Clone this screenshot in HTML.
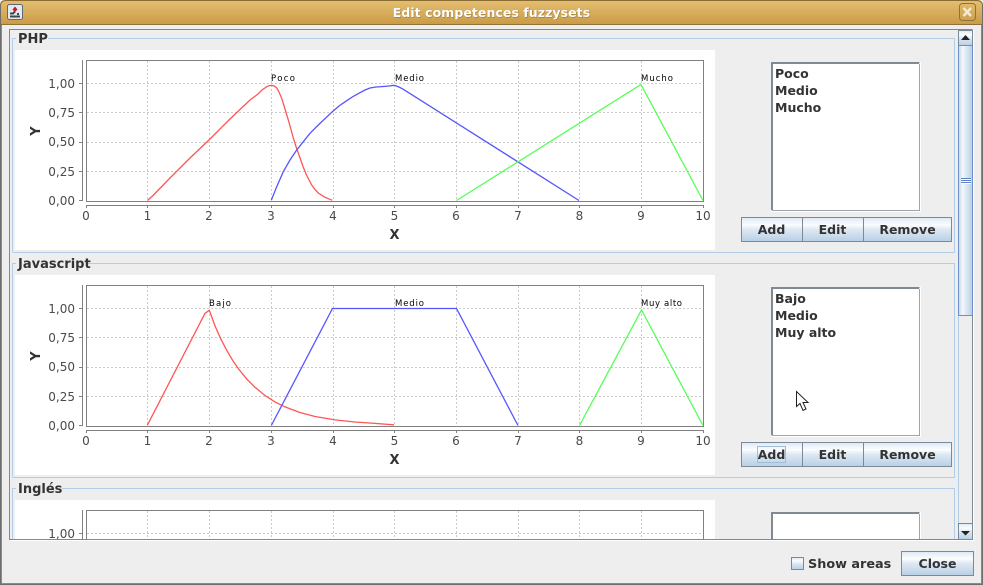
<!DOCTYPE html>
<html><head><meta charset="utf-8"><title>Edit competences fuzzysets</title>
<style>
html,body{margin:0;padding:0;background:#eee;width:983px;height:585px;overflow:hidden;}
body{position:relative;font-family:"DejaVu Sans",sans-serif;}
svg{position:absolute;left:0;top:0;display:block;}
.lbl{font:bold 13px "DejaVu Sans",sans-serif;fill:#333;}
.tk{font:12px "DejaVu Sans",sans-serif;fill:#4a4a4a;}
.ax{font:bold 13px "DejaVu Sans",sans-serif;fill:#333;}
.s{font:8.5px "DejaVu Sans",sans-serif;fill:#000;}
.li{font:bold 12.5px "DejaVu Sans",sans-serif;fill:#333;}
.b{font:bold 12.5px "DejaVu Sans",sans-serif;fill:#333;text-anchor:middle;}
.c{fill:none;stroke-width:1.3;}
</style></head><body>
<svg width="983" height="585" viewBox="0 0 983 585" xmlns="http://www.w3.org/2000/svg">
<defs>
<linearGradient id="tb" x1="0" y1="0" x2="0" y2="1"><stop offset="0" stop-color="#e5bf72"/><stop offset="1" stop-color="#c99a46"/></linearGradient>
<linearGradient id="bt" x1="0" y1="0" x2="0" y2="1"><stop offset="0" stop-color="#dde8f3"/><stop offset=".3" stop-color="#fbfdfe"/><stop offset=".5" stop-color="#dde8f3"/><stop offset="1" stop-color="#b8cfe5"/></linearGradient>
<linearGradient id="th" x1="0" y1="0" x2="1" y2="0"><stop offset="0" stop-color="#c4d6ea"/><stop offset=".3" stop-color="#f4f8fc"/><stop offset=".55" stop-color="#dde8f3"/><stop offset="1" stop-color="#b8cfe5"/></linearGradient>
<g id="frame" fill="none" shape-rendering="crispEdges">
<rect x="15" y="50" width="700" height="200" fill="#fff"/>
<g stroke="#cacaca" stroke-dasharray="2 2">
<path d="M147.5 61V201M209.5 61V201M271.5 61V201M333.5 61V201M394.5 61V201M456.5 61V201M518.5 61V201M579.5 61V201M641.5 61V201"/>
<path d="M87 83.5H703M87 112.5H703M87 142.5H703M87 171.5H703"/>
</g>
<rect x="86.5" y="60.5" width="617" height="141" stroke="#808080"/>
<path d="M82.5 60V201M79 83.5H82M79 112.5H82M79 142.5H82M79 171.5H82M79 200.5H82" stroke="#808080"/>
<path d="M86.5 205.5H703.5M86.5 205V208M147.5 205V208M209.5 205V208M271.5 205V208M333.5 205V208M394.5 205V208M456.5 205V208M518.5 205V208M579.5 205V208M641.5 205V208M703.5 205V208" stroke="#808080"/>
</g>
<g id="side" shape-rendering="crispEdges">
<rect x="773" y="64" width="146" height="146" fill="#fff"/>
<path d="M771.5 210V62.5H919.5M772.5 210V63.5H919" fill="none" stroke="#808a94"/>
<path d="M919.5 64V210.500H772" fill="none" stroke="#9aa5b0"/>
<path d="M920.5 62V211.500H771" fill="none" stroke="#fff"/>
<rect x="741.5" y="217.5" width="61" height="24" fill="url(#bt)" stroke="#7a8a99"/>
<rect x="802.5" y="217.5" width="61" height="24" fill="url(#bt)" stroke="#7a8a99"/>
<rect x="863.5" y="217.5" width="88" height="24" fill="url(#bt)" stroke="#7a8a99"/>
</g>
</defs>

<rect width="983" height="585" fill="#eee"/>
<path d="M0 25V6Q0 0 6 0H977Q983 0 983 6V25Z" fill="url(#tb)"/>
<path d="M0 24.5H983" stroke="#8f7238" stroke-width="1"/>
<path d="M.5 6V584.5H982.5V6" fill="none" stroke="#6e6e6e"/>
<path d="M1.5 25V583.5H981.5V25" fill="none" stroke="#8a8a8a"/>
<path d="M.5 6Q.5 .5 6 .5H977Q982.5 .5 982.5 6" fill="none" stroke="#8a6c30"/>

<rect x="7.5" y="4.5" width="15" height="15" rx="2" fill="#e4e9ef" stroke="#5d6a78"/>
<path d="M10 16.500H20M10 13.500H13L15 11.500M18 13V15" fill="none" stroke="#444" stroke-width="2"/>
<path d="M15 6.500L17.500 9.500L15 12L12.500 9.500Z" fill="#c02020"/>
<text x="492" y="17.500" text-anchor="middle" style="font:bold 12.600px 'DejaVu Sans',sans-serif" fill="#8a6a2c">Edit competences fuzzysets</text>
<text x="491.500" y="17" text-anchor="middle" style="font:bold 12.600px 'DejaVu Sans',sans-serif" fill="#fff">Edit competences fuzzysets</text>
<rect x="959.500" y="3.500" width="16" height="17" rx="3" fill="none" stroke="#8f7238"/>
<path d="M963.500 8L971 16M971 8L963.500 16" stroke="#f3ead6" stroke-width="2.400"/>

<rect x="10" y="29.500" width="963" height="510" fill="#eee"/>

<!-- PHP -->
<path d="M12.500 252V38.500H16M48 38.500H954.500V252.500H12.500" fill="none" stroke="#b3cde6" shape-rendering="crispEdges"/>
<text class="lbl" x="18" y="43">PHP</text>
<use href="#frame"/>
<use href="#side"/>
<g class="tk">
<text x="75" y="88" text-anchor="end">1,00</text><text x="75" y="117" text-anchor="end">0,75</text><text x="75" y="146" text-anchor="end">0,50</text><text x="75" y="176" text-anchor="end">0,25</text><text x="75" y="205" text-anchor="end">0,00</text>
</g>
<g class="tk" text-anchor="middle">
<text x="86" y="220">0</text><text x="147.500" y="220">1</text><text x="209" y="220">2</text><text x="271" y="220">3</text><text x="333" y="220">4</text><text x="394.500" y="220">5</text><text x="456" y="220">6</text><text x="518" y="220">7</text><text x="579.500" y="220">8</text><text x="641" y="220">9</text><text x="703" y="220">10</text>
</g>
<text class="ax" x="394.500" y="239" text-anchor="middle">X</text>
<text class="ax" text-anchor="middle" transform="translate(40 131) rotate(-90)">Y</text>
<polyline class="c" stroke="#ff5555" points="147.500,200.500 153,195.500 170,178 190,158 210,139 230,119 250,100 254,97 258,94 262,90 266.700,86.700 269,85.700 271.300,85.300 274,85.800 276.700,87.800 279,92 281.700,98.300 285,109 288.300,120 291,129.500 293.300,138 296,146.500 299,155 303,166.500 306.700,175.500 311.700,185 315,189.500 318.300,193 325,197.300 332.300,200.300"/>
<polyline class="c" stroke="#5555ff" points="271.300,200.300 276.700,186.700 283.300,171.700 290,160 296.700,150 303.300,141.700 310,133.300 318.300,125 332.300,111.700 339,106 346.700,100.700 353,96.500 360,92.700 365,90 370,88 376,87 383.300,86.500 389,86 394.300,85.300 399,87 403.300,89.300 579,200.500"/>
<polyline class="c" stroke="#55ff55" points="456.500,200.500 641,84.500 703,200.500"/>
<text class="s" x="271" y="81" textLength="24">Poco</text><text class="s" x="395" y="81" textLength="29">Medio</text><text class="s" x="641" y="81" textLength="32">Mucho</text>
<text class="li" x="775" y="78">Poco</text><text class="li" x="775" y="95">Medio</text><text class="li" x="775" y="112">Mucho</text>
<text class="b" x="771.500" y="234">Add</text><text class="b" x="832.500" y="234">Edit</text><text class="b" x="907.500" y="234">Remove</text>

<!-- Javascript -->
<path d="M12.500 477V263.500H16M88 263.500H954.500V477.500H12.500" fill="none" stroke="#b3cde6" shape-rendering="crispEdges"/>
<text class="lbl" x="18" y="268">Javascript</text>
<use href="#frame" y="225"/>
<use href="#side" y="225"/>
<g class="tk">
<text x="75" y="313" text-anchor="end">1,00</text><text x="75" y="342" text-anchor="end">0,75</text><text x="75" y="371" text-anchor="end">0,50</text><text x="75" y="401" text-anchor="end">0,25</text><text x="75" y="430" text-anchor="end">0,00</text>
</g>
<g class="tk" text-anchor="middle">
<text x="86" y="445">0</text><text x="147.500" y="445">1</text><text x="209" y="445">2</text><text x="271" y="445">3</text><text x="333" y="445">4</text><text x="394.500" y="445">5</text><text x="456" y="445">6</text><text x="518" y="445">7</text><text x="579.500" y="445">8</text><text x="641" y="445">9</text><text x="703" y="445">10</text>
</g>
<text class="ax" x="394.500" y="464" text-anchor="middle">X</text>
<text class="ax" text-anchor="middle" transform="translate(40 356) rotate(-90)">Y</text>
<polyline class="c" stroke="#ff5555" points="147.300,425.300 205,313.300 209.300,310.300 215,325.900 221,339.300 227,350.800 233,360.900 239,369.500 247,379.300 255,387.300 265,395.500 275,401.900 285,406.900 300,412.500 315,416.500 335,419.900 355,422 375,423.400 394,424.800"/>
<polyline class="c" stroke="#5555ff" points="271.300,425.500 332.500,308.500 456.500,308.500 518,425.500"/>
<polyline class="c" stroke="#55ff55" points="579.500,425.500 641.500,310 703,425.500"/>
<text class="s" x="209" y="306" textLength="22">Bajo</text><text class="s" x="395" y="306" textLength="29">Medio</text><text class="s" x="641" y="306" textLength="41">Muy alto</text>
<text class="li" x="775" y="303">Bajo</text><text class="li" x="775" y="320">Medio</text><text class="li" x="775" y="337">Muy alto</text>
<text class="b" x="771.500" y="459">Add</text><text class="b" x="832.500" y="459">Edit</text><text class="b" x="907.500" y="459">Remove</text>
<rect x="757.500" y="446.500" width="28" height="16" fill="none" stroke="#a3bcd6" shape-rendering="crispEdges"/>

<!-- mouse cursor -->
<path d="M796.500 391.500V406.500L800 403.500L803 410.500L806 409L803 402.500H808Z" fill="#fff" stroke="#222" stroke-width="1"/>

<!-- Ingles -->
<path d="M12.500 539V488.500H16M62 488.500H954.500V539" fill="none" stroke="#b3cde6" shape-rendering="crispEdges"/>
<text class="lbl" x="18" y="493">Inglés</text>
<rect x="15" y="500" width="700" height="39" fill="#fff"/>
<g fill="none" shape-rendering="crispEdges">
<path stroke="#cacaca" stroke-dasharray="2 2" d="M147.500 511V539M209.500 511V539M271.500 511V539M333.500 511V539M394.500 511V539M456.500 511V539M518.500 511V539M579.500 511V539M641.500 511V539M87 533.500H703"/>
<path stroke="#808080" d="M86.500 539V510.500H703.500V539M82.500 510V539M79 533.500H82"/>
</g>
<text class="tk" x="75" y="538" text-anchor="end">1,00</text>
<g shape-rendering="crispEdges">
<rect x="773" y="514" width="146" height="25" fill="#fff"/>
<path d="M771.500 539V512.500H919.500M772.500 539V513.500H919" fill="none" stroke="#808a94"/>
<path d="M919.500 514V539" fill="none" stroke="#9aa5b0"/>
<path d="M920.500 512V539" fill="none" stroke="#fff"/>
</g>

<path d="M9.500 540V29.500H972.500" fill="none" stroke="#808890" shape-rendering="crispEdges"/>
<path d="M10 539.500H972.500V30" fill="none" stroke="#808890" shape-rendering="crispEdges"/>
<path d="M10 540.500H973.500V30" fill="none" stroke="#fff" shape-rendering="crispEdges"/>

<g shape-rendering="crispEdges">
<rect x="958" y="30" width="14" height="509" fill="#eee"/>
<path d="M958.500 30V539" stroke="#b3cde6"/>
<rect x="958.500" y="30.500" width="14" height="15" fill="url(#bt)" stroke="#7a8a99"/>
<rect x="958.500" y="45.500" width="14" height="270" fill="url(#th)" stroke="#6f8fc8"/>
<path d="M961 178.500H971M961 180.500H971M961 182.500H971" stroke="#5b80c8"/>
<path d="M961 179.500H971M961 181.500H971M961 183.500H971" stroke="#fff"/>
<rect x="958.500" y="523.500" width="14" height="16" fill="url(#bt)" stroke="#7a8a99"/>
</g>
<path d="M961 40H970L965.500 35Z" fill="#222"/>
<path d="M961 531H970L965.500 535.500Z" fill="#222"/>

<g shape-rendering="crispEdges">
<rect x="791.500" y="557.500" width="12" height="12" fill="url(#bt)" stroke="#7a8a99"/>
<rect x="901.500" y="551.500" width="72" height="24" fill="url(#bt)" stroke="#7a8a99"/>
</g>
<text x="808" y="568" style="font:bold 12.800px 'DejaVu Sans',sans-serif" fill="#333">Show areas</text>
<text class="b" x="937.500" y="568">Close</text>
</svg>
</body></html>
